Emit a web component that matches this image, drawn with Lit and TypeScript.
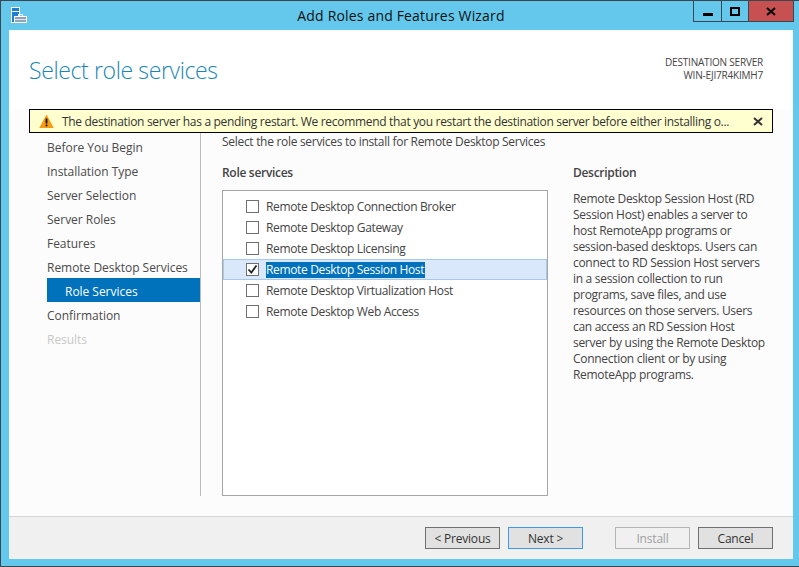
import { LitElement, html, css } from 'lit';
import { customElement } from 'lit/decorators.js';

const steps = [
  { label: 'Before You Begin' },
  { label: 'Installation Type' },
  { label: 'Server Selection' },
  { label: 'Server Roles' },
  { label: 'Features' },
  { label: 'Remote Desktop Services' },
  { label: 'Role Services', active: true },
  { label: 'Confirmation' },
  { label: 'Results', disabled: true },
];

const roles = [
  'Remote Desktop Connection Broker',
  'Remote Desktop Gateway',
  'Remote Desktop Licensing',
  'Remote Desktop Session Host',
  'Remote Desktop Virtualization Host',
  'Remote Desktop Web Access',
];

const descriptionLines = [
  'Remote Desktop Session Host (RD',
  'Session Host) enables a server to',
  'host RemoteApp programs or',
  'session-based desktops. Users can',
  'connect to RD Session Host servers',
  'in a session collection to run',
  'programs, save files, and use',
  'resources on those servers. Users',
  'can access an RD Session Host',
  'server by using the Remote Desktop',
  'Connection client or by using',
  'RemoteApp programs.',
];

@customElement('app-root')
export class AppRoot extends LitElement {
  static styles = css`
    :host {
      display: block;
      width: 799px;
      height: 567px;
      font-family: 'Open Sans', 'Noto Sans', sans-serif;
      font-size: 12px;
      letter-spacing: -0.3px;
      color: #444;
    }
    .window {
      box-sizing: border-box;
      width: 799px;
      height: 567px;
      background: #63c8ec;
      border: 1px solid #3c4650;
      border-right: none;
      display: flex;
      flex-direction: column;
      overflow: hidden;
    }
    .titlebar {
      height: 29px;
      flex: none;
      display: flex;
      justify-content: space-between;
      padding: 0 5px 0 10px;
      position: relative;
    }
    .app-icon {
      margin-top: 6px;
    }
    .title {
      position: absolute;
      left: 0;
      right: 0;
      top: 5px;
      padding-left: 2px;
      text-align: center;
      font-size: 14px;
      letter-spacing: 0.17px;
      color: #111;
    }
    .controls {
      display: flex;
      height: 21px;
      border: 1px solid #3c4650;
      border-top: none;
      box-sizing: border-box;
    }
    .controls div {
      display: flex;
      align-items: center;
      justify-content: center;
      height: 100%;
    }
    .controls .min {
      width: 27px;
      border-right: 1px solid #3c4650;
    }
    .controls .max {
      width: 26px;
      border-right: 1px solid #3c4650;
    }
    .controls .close {
      width: 44px;
      background: #c75050;
    }
    .client {
      margin: 0 6px 0 8px;
      height: 529px;
      flex: none;
      background: #fcfcfc;
      display: flex;
      flex-direction: column;
    }
    .head {
      height: 79px;
      flex: none;
      background: #fff;
      display: flex;
      justify-content: space-between;
      padding: 0 30px 0 20px;
      box-sizing: border-box;
    }
    h1 {
      margin: 23px 0 0;
      font-size: 23px;
      font-weight: 300;
      letter-spacing: -0.38px;
      line-height: 35px;
      color: #1b86b5;
    }
    .server {
      margin-top: 26px;
      text-align: right;
      font-size: 10px;
      line-height: 13px;
      letter-spacing: -0.2px;
      color: #444;
    }
    .banner {
      box-sizing: border-box;
      margin: 0 20px;
      height: 24px;
      flex: none;
      background: #ffffd0;
      border: 1px solid #000;
      display: flex;
      align-items: center;
      padding: 0 9px;
      color: #333;
      white-space: nowrap;
      letter-spacing: -0.315px;
    }
    .banner .msg {
      margin-left: 8px;
      flex: 1;
    }
    .body {
      flex: 1;
      display: flex;
      min-height: 0;
    }
    .nav {
      width: 192px;
      height: 363px;
      box-sizing: border-box;
      padding: 1px 0 0 38px;
      border-right: 1px solid #bdbdbd;
      flex: none;
      letter-spacing: -0.03px;
    }
    .step {
      height: 24px;
      line-height: 28px;
      color: #4a4a4a;
      width: 153px;
    }
    .step.active {
      background: #0072bc;
      color: #fff;
      padding-left: 18px;
      box-sizing: border-box;
    }
    .step.disabled {
      color: #c8c8c8;
    }
    .main {
      flex: 1;
      padding-left: 21px;
      min-width: 0;
    }
    .intro {
      height: 18px;
      line-height: 18px;
      color: #444;
    }
    .panes {
      display: flex;
      margin-top: 13px;
    }
    .roles {
      width: 326px;
      flex: none;
    }
    .pane-title {
      font-weight: 600;
      line-height: 18px;
      height: 18px;
      color: #444;
    }
    .list {
      box-sizing: border-box;
      margin-top: 8px;
      width: 326px;
      height: 306px;
      background: #fff;
      border: 1px solid #a6a6a6;
      padding-top: 5px;
    }
    .role {
      box-sizing: border-box;
      height: 21px;
      display: flex;
      align-items: center;
      padding-left: 23px;
      white-space: nowrap;
      color: #444;
      letter-spacing: -0.35px;
    }
    .role.selected {
      background: #d9e8fb;
      border: 1px solid #a9c8ee;
      padding-left: 22px;
    }
    .box {
      box-sizing: border-box;
      width: 13px;
      height: 13px;
      border: 1px solid #707070;
      background: #fff;
      flex: none;
      margin-right: 7px;
      display: flex;
    }
    .role .text {
      line-height: 16px;
      padding-right: 1px;
    }
    .role.selected .text {
      background: #0072bc;
      color: #fff;
    }
    .desc {
      margin-left: 25px;
      white-space: nowrap;
    }
    .desc .lines {
      margin-top: 9px;
      line-height: 16px;
      color: #444;
    }
    .footer {
      height: 43px;
      flex: none;
      box-sizing: border-box;
      background: #f0f0f0;
      border-top: 1px solid #d6d6d6;
      display: flex;
      padding: 10px 0 0 416px;
    }
    button {
      box-sizing: border-box;
      width: 75px;
      height: 22px;
      padding: 0;
      background: #e1e1e1;
      border: 1px solid #707070;
      font: inherit;
      letter-spacing: -0.2px;
      color: #333;
      margin-right: 8px;
    }
    button.primary {
      border-color: #3c9bf0;
      margin-right: 32px;
    }
    button[disabled] {
      background: #f0f0f0;
      border-color: #b5b5b5;
      color: #a0a0a0;
    }
  `;

  render() {
    return html`
      <div class="window">
        <div class="titlebar">
          <svg class="app-icon" width="17" height="17" viewBox="0 0 17 17">
            <rect x="0.5" y="0.5" width="8" height="15" fill="#1e7fd0" stroke="#fff"/>
            <path d="M1 4.5h7" stroke="#fff"/>
            <rect x="3.5" y="9.5" width="12" height="6" fill="#8ea4b6" stroke="#fff"/>
            <path d="M7.5 9.5v-2h4v2" fill="none" stroke="#fff"/>
            <path d="M4 12.5h11" stroke="#dfe7ec"/>
          </svg>
          <div class="title">Add Roles and Features Wizard</div>
          <div class="controls">
            <div class="min"><svg width="10" height="10"><rect y="7" width="10" height="3" fill="#000"/></svg></div>
            <div class="max"><svg width="10" height="9"><path d="M1 1h8v7H1z" fill="none" stroke="#000" stroke-width="2"/></svg></div>
            <div class="close"><svg width="10" height="9"><path d="M1 1l8 7M9 1l-8 7" fill="none" stroke="#000" stroke-width="2"/></svg></div>
          </div>
        </div>
        <div class="client">
          <div class="head">
            <h1>Select role services</h1>
            <div class="server">DESTINATION SERVER<br />WIN-EJI7R4KIMH7</div>
          </div>
          <div class="banner">
            <svg width="15" height="14" viewBox="0 0 15 14">
              <path d="M7.5 0.5L14.8 14H0.2z" fill="#f59a13"/>
              <path d="M6.6 4.5h1.8v5H6.6zM6.6 10.5h1.8v1.8H6.6z" fill="#111"/>
            </svg>
            <span class="msg">The destination server has a pending restart. We recommend that you restart the destination server before either installing o...</span>
            <svg width="10" height="9"><path d="M1 1l8 7M9 1l-8 7" fill="none" stroke="#333" stroke-width="2"/></svg>
          </div>
          <div class="body">
            <div class="nav">
              ${steps.map(
                (s) => html`<div class="step ${s.active ? 'active' : ''} ${s.disabled ? 'disabled' : ''}">${s.label}</div>`
              )}
            </div>
            <div class="main">
              <div class="intro">Select the role services to install for Remote Desktop Services</div>
              <div class="panes">
                <div class="roles">
                  <div class="pane-title">Role services</div>
                  <div class="list">
                    ${roles.map((r, i) => {
                      const selected = i === 3;
                      return html`<div class="role ${selected ? 'selected' : ''}">
                        <span class="box">
                          ${selected
                            ? html`<svg width="11" height="11"><path d="M1.5 5.5l2.8 3L9.5 1.5" fill="none" stroke="#222" stroke-width="1.8"/></svg>`
                            : ''}
                        </span>
                        <span class="text">${r}</span>
                      </div>`;
                    })}
                  </div>
                </div>
                <div class="desc">
                  <div class="pane-title">Description</div>
                  <div class="lines">${descriptionLines.map((l) => html`${l}<br />`)}</div>
                </div>
              </div>
            </div>
          </div>
          <div class="footer">
            <button>&lt; Previous</button>
            <button class="primary">Next &gt;</button>
            <button disabled>Install</button>
            <button>Cancel</button>
          </div>
        </div>
      </div>
    `;
  }
}
